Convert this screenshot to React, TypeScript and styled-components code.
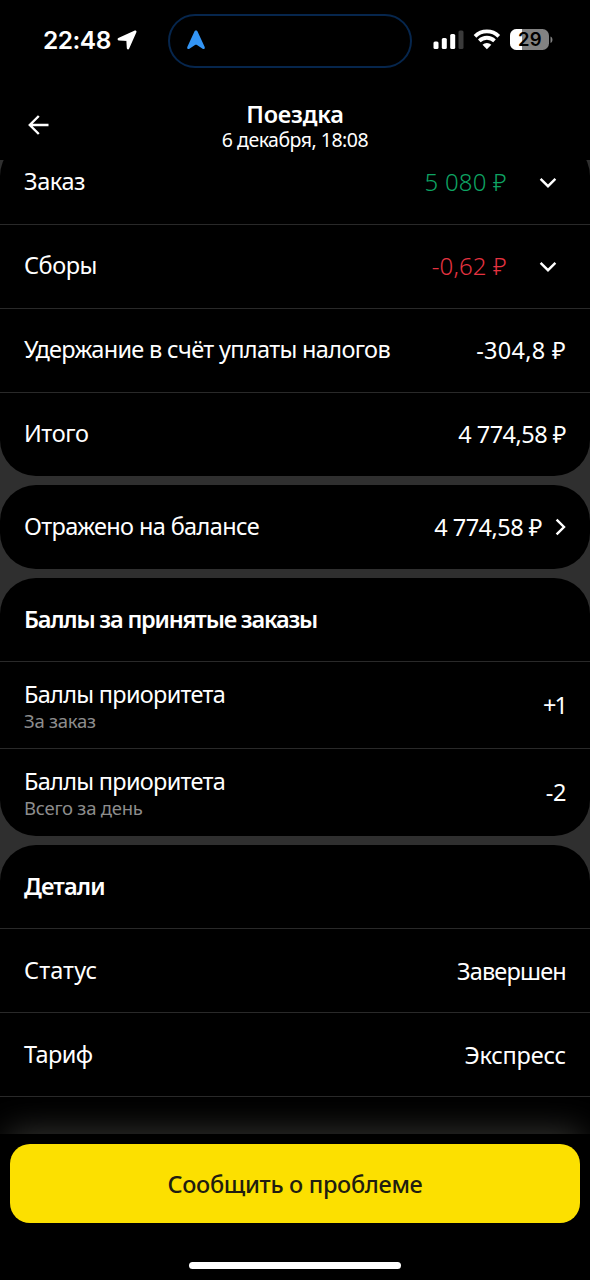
import React from "react";
import styled, { createGlobalStyle } from "styled-components";

const GlobalStyle = createGlobalStyle`
  * { box-sizing: border-box; }
  body {
    margin: 0;
    background: #000;
    color: #fff;
    font-family: "Noto Sans", "Open Sans", sans-serif;
    overflow: hidden;
  }
`;

const Screen = styled.div`
  width: 590px;
  height: 1280px;
  display: flex;
  flex-direction: column;
  overflow: hidden;
  background: #000;
`;

const StatusBar = styled.div`
  height: 80px;
  flex: none;
  display: grid;
  grid-template-columns: 168px 244px 178px;
`;

const Clock = styled.div`
  display: flex;
  align-items: center;
  gap: 6px;
  padding-left: 43px;
  font: 600 24.5px/80px Inter, sans-serif;
  letter-spacing: -0.5px;
`;

const Island = styled.div`
  height: 54px;
  margin-top: 14px;
  padding: 0 0 2px 17px;
  border: 2px solid #06264d;
  border-radius: 27px;
  display: flex;
  align-items: center;
`;

const Indicators = styled.div`
  display: flex;
  align-items: center;
  padding-left: 21px;
`;

const Header = styled.header`
  height: 80px;
  flex: none;
  display: grid;
  grid-template-columns: 80px 1fr 80px;
`;

const BackButton = styled.button`
  border: 0;
  background: none;
  color: #fff;
  padding: 12px 0 0 28px;
  display: flex;
  align-items: center;
  height: 78px;
`;

const Heading = styled.div`
  display: flex;
  flex-direction: column;
  align-items: center;
  padding-top: 19px;
`;

const Text = styled.span<{ size?: number; weight?: number; track?: number; tone?: string; line?: number }>`
  font-size: ${(p) => p.size ?? 23.5}px;
  font-weight: ${(p) => p.weight ?? 400};
  letter-spacing: ${(p) => p.track ?? 0}px;
  line-height: ${(p) => p.line ?? 30}px;
  color: ${(p) => p.tone ?? "#fff"};
  white-space: nowrap;
`;

const Label = styled(Text)`
  padding-bottom: 2px;
`;

const Scroll = styled.main`
  flex: 1;
  min-height: 0;
  overflow: hidden;
  background: #2f2f2f;
`;

const Feed = styled.div`
  margin-top: -20px;
  display: flex;
  flex-direction: column;
  gap: 9px;
`;

const Card = styled.section`
  background: #000;
  border-radius: 36px;
  overflow: hidden;
`;

const Row = styled.div<{ tall?: boolean; last?: boolean; inset?: boolean }>`
  height: ${(p) => (p.tall ? 87 : 84)}px;
  padding: 0 24px;
  display: flex;
  align-items: center;
  justify-content: space-between;
  box-shadow: ${(p) => (p.last ? "none" : p.inset ? "inset 0 -1px 0 #292929" : "0 1px 0 #292929")};
`;

const Stack = styled.div`
  display: flex;
  flex-direction: column;
  padding-bottom: 1px;
`;

const Value = styled.div<{ gap?: number; end?: number }>`
  display: flex;
  align-items: center;
  gap: ${(p) => p.gap ?? 0}px;
  padding-right: ${(p) => p.end ?? 0}px;
`;

const Peek = styled.div`
  height: 100px;
`;

const Footer = styled.footer`
  height: 146px;
  flex: none;
  padding: 10px 10px 0;
  display: flex;
  flex-direction: column;
  align-items: center;
  position: relative;
  background: #000;
`;

const Shade = styled.div`
  position: absolute;
  left: 0;
  right: 0;
  top: -36px;
  height: 36px;
  overflow: hidden;
  &::after {
    content: "";
    position: absolute;
    left: 10px;
    right: 10px;
    top: 36px;
    height: 40px;
    box-shadow: 0 0 34px 2px rgba(66, 66, 62, 0.85);
  }
`;

const Action = styled.button`
  width: 570px;
  height: 79px;
  border: 0;
  border-radius: 20px;
  background: #fce000;
  font-family: inherit;
  padding: 0;
`;

const HomeBar = styled.div`
  width: 212px;
  height: 7px;
  margin-top: 39px;
  border-radius: 4px;
  background: #fff;
`;

const Down = () => (
  <svg width="18" height="14" viewBox="0 -2 18 14" fill="none" stroke="#fff" strokeWidth="2.4">
    <path d="M1.6 1.8 9 9.2 16.4 1.8" />
  </svg>
);

const Right = () => (
  <svg width="11" height="18" viewBox="0 0 11 18" fill="none" stroke="#fff" strokeWidth="2.4">
    <path d="M1.6 1.6 9 9 1.6 16.4" />
  </svg>
);

export default function App() {
  return (
    <Screen>
      <GlobalStyle />
      <StatusBar>
        <Clock>
          22:48
          <svg width="20" height="20" viewBox="0 0 20 20" fill="#fff" stroke="#fff" strokeWidth="2.4" strokeLinejoin="round">
            <path d="M18.300 1.700 1.800 9.200l8.700.5.500 8.500Z" />
          </svg>
        </Clock>
        <Island>
          <svg width="18" height="20" viewBox="0 0 18 20" fill="#3395f5">
            <path d="M9 .6C8 .6 7.500 1.200 7.100 2.200L.4 16.800C-.3 18.500 1 19.600 2.400 18.700L8 15.100c.7-.4 1.300-.4 2 0l5.600 3.600c1.400.9 2.700-.2 2-1.900L10.900 2.200C10.500 1.200 10 .6 9 .6Z" />
          </svg>
        </Island>
        <Indicators>
          <svg width="120" height="24" viewBox="433 28 120 24">
            <g fill="#fff">
              <rect x="433.5" y="41.5" width="5" height="7.5" rx="1.5" />
              <rect x="441.8" y="38" width="5" height="11" rx="1.5" />
              <rect x="450.2" y="34" width="5" height="15" rx="1.5" />
              <rect x="458.5" y="30.5" width="5" height="18.5" rx="1.5" fill="#3a3a3a" />
            </g>
            <g fill="none" stroke="#fff" strokeWidth="3.8">
              <path d="M475 36.3a17 17 0 0 1 23.800 0" />
              <path d="M479.300 40.800a11 11 0 0 1 15.200 0" />
            </g>
            <path d="M486.900 49.200 482.500 44.700a6.400 6.400 0 0 1 8.800 0Z" fill="#fff" />
            <clipPath id="cell">
              <rect x="510" y="29" width="39" height="21" rx="6.5" />
            </clipPath>
            <g clipPath="url(#cell)">
              <rect x="510" y="29" width="39" height="21" fill="#828282" />
              <rect x="510" y="29" width="12" height="21" fill="#fff" />
            </g>
            <path d="M550.500 36.500c2.600.9 2.600 5.600 0 6.500Z" fill="#828282" />
            <text x="529.8" y="46" textAnchor="middle" fill="#000" fontFamily="Inter, sans-serif" fontWeight="600" fontSize="18.5">29</text>
          </svg>
        </Indicators>
      </StatusBar>
      <Header>
        <BackButton aria-label="Назад">
          <svg width="22" height="20" viewBox="0 0 22 20" fill="none" stroke="#fff" strokeWidth="2.4">
            <path d="M20.5 10H2M10.8 1 1.8 10l9 9" />
          </svg>
        </BackButton>
        <Heading>
          <Text size={23.5} weight={600} track={-0.2}>Поездка</Text>
          <Text size={19.5} line={22} track={-0.5}>6 декабря, 18:08</Text>
        </Heading>
      </Header>
      <Scroll>
        <Feed>
          <Card>
            <Row>
              <Label track={-0.4}>Заказ</Label>
              <Value gap={32} end={9}>
                <Text weight={300} size={24} track={0.2} tone="#0ea463">5 080 ₽</Text>
                <Down />
              </Value>
            </Row>
            <Row>
              <Label track={-0.45}>Сборы</Label>
              <Value gap={32} end={9}>
                <Text weight={300} size={24} track={0.15} tone="#e63340">-0,62 ₽</Text>
                <Down />
              </Value>
            </Row>
            <Row>
              <Label track={-0.66}>Удержание в счёт уплаты налогов</Label>
              <Text track={0.3}>-304,8 ₽</Text>
            </Row>
            <Row last>
              <Label track={-0.4}>Итого</Label>
              <Text track={-0.5}>4 774,58 ₽</Text>
            </Row>
          </Card>
          <Card>
            <Row last>
              <Label track={-0.62}>Отражено на балансе</Label>
              <Value gap={13}>
                <Text track={-0.5}>4 774,58 ₽</Text>
                <Right />
              </Value>
            </Row>
          </Card>
          <Card>
            <Row inset>
              <Label weight={600} track={-1.2}>Баллы за принятые заказы</Label>
            </Row>
            <Row tall inset>
              <Stack>
                <Text track={-0.7}>Баллы приоритета</Text>
                <Text size={18.5} line={23} track={-0.25} tone="#8d8d8d">За заказ</Text>
              </Stack>
              <Label track={-2}>+1</Label>
            </Row>
            <Row tall last>
              <Stack>
                <Text track={-0.7}>Баллы приоритета</Text>
                <Text size={18.5} line={23} track={-0.25} tone="#8d8d8d">Всего за день</Text>
              </Stack>
              <Label track={-0.4}>-2</Label>
            </Row>
          </Card>
          <Card>
            <Row inset>
              <Label weight={600} track={-0.85}>Детали</Label>
            </Row>
            <Row inset>
              <Label track={0.1}>Статус</Label>
              <Text track={-0.8}>Завершен</Text>
            </Row>
            <Row inset>
              <Label track={-0.6}>Тариф</Label>
              <Text track={-0.2}>Экспресс</Text>
            </Row>
            <Peek />
          </Card>
        </Feed>
      </Scroll>
      <Footer>
        <Shade />
        <Action>
          <Text weight={500} track={-0.32} tone="#211d10">Сообщить о проблеме</Text>
        </Action>
        <HomeBar />
      </Footer>
    </Screen>
  );
}
